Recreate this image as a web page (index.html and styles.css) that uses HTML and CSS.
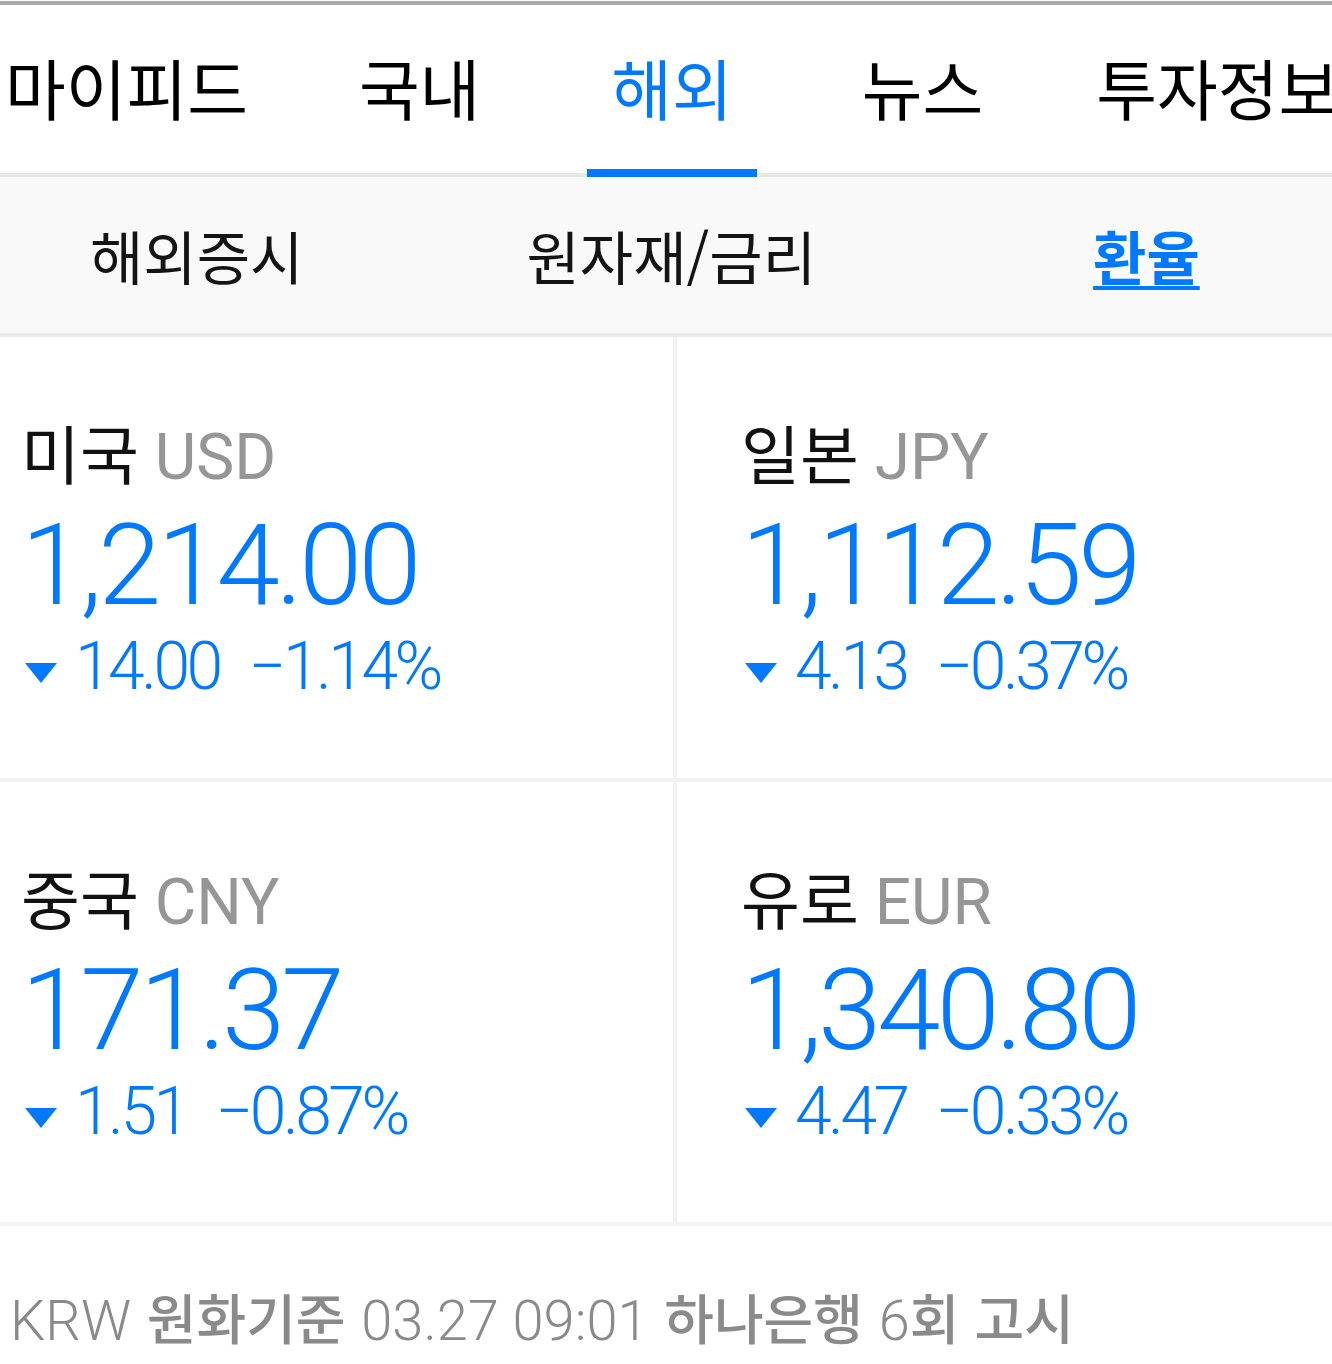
FILE: index.html
```html
<!DOCTYPE html>
<html lang="ko">
<head>
<meta charset="utf-8">
<title>해외 환율</title>
<link rel="stylesheet" href="styles.css">
</head>
<body>
<div class="page">
  <nav class="tabs">
    <a class="tab t1">마이피드</a>
    <a class="tab t2">국내</a>
    <a class="tab t3 active">해외</a>
    <a class="tab t4">뉴스</a>
    <a class="tab t5">투자정보</a>
  </nav>
  <nav class="subtabs">
    <a class="subtab s1">해외증시</a>
    <a class="subtab s2">원자재/금리</a>
    <a class="subtab s3 active">환율</a>
  </nav>
  <section class="grid">
    <div class="card left">
      <div class="label"><span class="ko">미국</span> <span class="code">USD</span></div>
      <div class="value">1,214.00</div>
      <div class="change"><span class="tri"></span><span class="amt">14.00</span><span class="pct">−1.14%</span></div>
    </div>
    <div class="card right">
      <div class="label"><span class="ko">일본</span> <span class="code">JPY</span></div>
      <div class="value">1,112.59</div>
      <div class="change"><span class="tri"></span><span class="amt">4.13</span><span class="pct">−0.37%</span></div>
    </div>
    <div class="card left">
      <div class="label"><span class="ko">중국</span> <span class="code">CNY</span></div>
      <div class="value">171.37</div>
      <div class="change"><span class="tri"></span><span class="amt">1.51</span><span class="pct">−0.87%</span></div>
    </div>
    <div class="card right">
      <div class="label"><span class="ko">유로</span> <span class="code">EUR</span></div>
      <div class="value">1,340.80</div>
      <div class="change"><span class="tri"></span><span class="amt">4.47</span><span class="pct">−0.33%</span></div>
    </div>
  </section>
  <footer class="footer">
    <span class="lt">KRW</span> <span class="ko">원화기준</span> <span class="lt">03.27 09:01</span> <span class="ko">하나은행</span> <span class="lt">6</span><span class="ko">회 고시</span>
  </footer>
</div>
</body>
</html>
```
FILE: styles.css
```css
* { box-sizing: border-box; }
html, body { margin: 0; padding: 0; background: #fff; }
body {
  font-family: "Noto Sans CJK KR", "Noto Sans", sans-serif;
  color: #111;
  overflow: hidden;
}
.page {
  width: 1332px;
  border-top: 4px solid #a8a8a8;
  margin-top: 1px;
}
a { text-decoration: none; color: inherit; }

/* main tabs */
.tabs {
  display: flex;
  height: 172px;
  border-bottom: 4px solid #e8e8e8;
  white-space: nowrap;
  overflow: visible;
}
.tab {
  position: relative;
  flex: none;
  font-size: 66px;
  line-height: 162px;
  height: 168px;
  padding: 0 24px;
  color: #000;
}
.tab.t1 { margin-left: -19px; }
.tab.t2 { margin-left: 63px; }
.tab.t3 { margin-left: 83px; }
.tab.t4 { margin-left: 81px; }
.tab.t5 { margin-left: 65px; }
.tab.active { color: #0079ff; }
.tab.active::after {
  content: "";
  position: absolute;
  left: 0; right: 0;
  bottom: -4px;
  height: 8px;
  background: #0079ff;
}

/* sub tabs */
.subtabs {
  display: flex;
  align-items: center;
  height: 160px;
  background: #f9f9f9;
  border-bottom: 4px solid #ebebeb;
  padding-left: 90px;
}
.subtab {
  font-size: 58px;
  line-height: 1;
  color: #141414;
}
.subtab.s2 { margin-left: 223px; }
.subtab.s3 { margin-left: 277px; }
.subtab.active {
  color: #0079ff;
  font-weight: 700;
  text-decoration: underline;
  text-decoration-thickness: 4px;
  text-underline-offset: 6px;
}

/* cards */
.grid {
  display: grid;
  grid-template-columns: 673px 1fr;
  grid-template-rows: 441px 440px;
  gap: 4px;
  background: #f2f2f2;
  border-bottom: 4px solid #f2f2f2;
}
.card {
  background: #fff;
  padding-top: 74px;
}
.card.left { padding-left: 21px; }
.card.right { padding-left: 64px; }
.label {
  font-family: Roboto, sans-serif;
  font-size: 64px;
  line-height: 80px;
  height: 80px;
  white-space: nowrap;
}
.label .ko {
  font-family: "Noto Sans CJK KR", sans-serif;
  font-size: 64px;
  color: #111;
}
.label .code { color: #969696; }
.value {
  margin-top: 14px;
  font-family: Roboto, sans-serif;
  font-weight: 300;
  font-size: 114px;
  letter-spacing: -4px;
  line-height: 120px;
  height: 120px;
  color: #0079ff;
  white-space: nowrap;
}
.change {
  display: flex;
  align-items: baseline;
  margin-top: 2px;
  font-family: Roboto, sans-serif;
  font-weight: 300;
  font-size: 66px;
  letter-spacing: -3.5px;
  line-height: 80px;
  color: #0079ff;
  white-space: nowrap;
}
.tri {
  align-self: center;
  width: 0; height: 0;
  border-left: 16px solid transparent;
  border-right: 16px solid transparent;
  border-top: 20px solid #0079ff;
  margin: 12px 18px 0 4px;
}
.pct { margin-left: 29px; }

/* footer */
.footer {
  padding: 50px 0 0 10px;
  font-size: 56px;
  line-height: 80px;
  color: #8a8a8a;
  white-space: nowrap;
}
.footer .lt {
  font-family: Roboto, sans-serif;
  font-weight: 300;
  font-size: 56px;
}
.footer .ko {
  font-family: "Noto Sans CJK KR", sans-serif;
  font-weight: 500;
  font-size: 54px;
}
```
